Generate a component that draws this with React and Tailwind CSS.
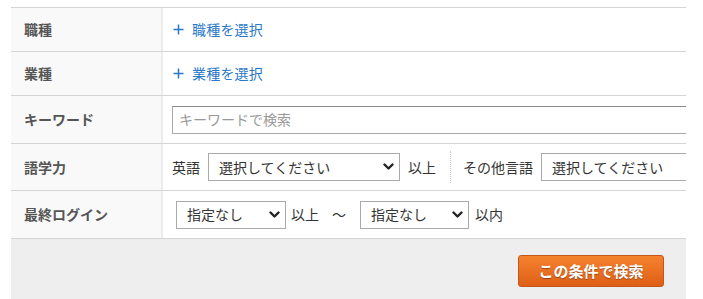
import React from "react";

const Chevron = () => (
  <svg width="11" height="8" viewBox="0 0 11 8" className="shrink-0">
    <path d="M1.5 1.5 L5.5 5.5 L9.5 1.5" fill="none" stroke="#222" strokeWidth="2.4" strokeLinecap="round" strokeLinejoin="round" />
  </svg>
);

const Plus = () => (
  <svg width="11" height="11" viewBox="0 0 11 11" className="mr-[8px] shrink-0">
    <path d="M5.5 0.5 V10.5 M0.5 5.5 H10.5" fill="none" stroke="#2a78c9" strokeWidth="1.5" />
  </svg>
);

const Select = ({ text, w }) => (
  <div className={`flex h-[28px] shrink-0 items-center justify-between border border-[#aaa] bg-white pl-[10px] pr-[5px] text-[14px] text-[#333] ${w}`}>
    <span>{text}</span>
    <Chevron />
  </div>
);

const Label = ({ children }) => (
  <div className="flex w-[152px] shrink-0 items-center border-r-2 border-[#ececec] bg-[#f9f9f9] pl-[13px] text-[14px] font-bold text-[#555]">
    {children}
  </div>
);

export default function App() {
  return (
    <div className="h-[299px] w-[703px] overflow-hidden bg-white pt-[7px] pl-[11px]" style={{ fontFamily: '"Noto Sans CJK JP", "Noto Sans", sans-serif' }}>
      <div className="w-[675px] border-t border-[#d4d4d4]">
        <div className="flex h-[44px] border-b border-[#d4d4d4]">
          <Label>職種</Label>
          <div className="flex items-center pl-[10px] text-[14px] tracking-[0.2px] text-[#2a78c9]">
            <Plus />職種を選択
          </div>
        </div>
        <div className="flex h-[44px] border-b border-[#d4d4d4]">
          <Label>業種</Label>
          <div className="flex items-center pl-[10px] text-[14px] tracking-[0.2px] text-[#2a78c9]">
            <Plus />業種を選択
          </div>
        </div>
        <div className="flex h-[48px] border-b border-[#d4d4d4]">
          <Label>キーワード</Label>
          <div className="flex min-w-0 flex-1 items-center overflow-hidden pl-[9px]">
            <div className="flex h-[28px] w-[560px] shrink-0 items-center border border-[#aaa] border-t-[#888] pl-[6px] text-[14px] text-[#999]">
              キーワードで検索
            </div>
          </div>
        </div>
        <div className="flex h-[47px] border-b border-[#d4d4d4]">
          <Label>語学力</Label>
          <div className="flex min-w-0 flex-1 items-center overflow-hidden pl-[9px] text-[14px] text-[#333]">
            <span className="mr-[8px] shrink-0">英語</span>
            <Select text="選択してください" w="w-[192px]" />
            <span className="ml-[8px] shrink-0">以上</span>
            <div className="ml-[14px] h-[32px] w-0 shrink-0 border-l border-dotted border-[#ccc]" />
            <span className="ml-[12px] shrink-0">その他言語</span>
            <div className="ml-[8px]">
              <Select text="選択してください" w="w-[192px]" />
            </div>
          </div>
        </div>
        <div className="flex h-[48px] border-b border-[#d4d4d4]">
          <Label>最終ログイン</Label>
          <div className="flex min-w-0 flex-1 items-center overflow-hidden pl-[13px] text-[14px] text-[#333]">
            <Select text="指定なし" w="w-[110px]" />
            <span className="ml-[5px] shrink-0">以上</span>
            <span className="ml-[13px] shrink-0">～</span>
            <div className="ml-[14px]">
              <Select text="指定なし" w="w-[109px]" />
            </div>
            <span className="ml-[6px] shrink-0">以内</span>
          </div>
        </div>
        <div className="flex h-[70px] justify-end bg-[#eeeeee] pr-[22px] pt-[16px]">
          <div
            className="flex h-[32px] w-[146px] items-center justify-center rounded-[3px] border border-[#c5561a] bg-gradient-to-b from-[#f5822f] to-[#de5f14] text-[15px] font-bold text-white"
            style={{ textShadow: "0 1px 1px rgba(0,0,0,0.35)" }}
          >
            この条件で検索
          </div>
        </div>
      </div>
    </div>
  );
}
